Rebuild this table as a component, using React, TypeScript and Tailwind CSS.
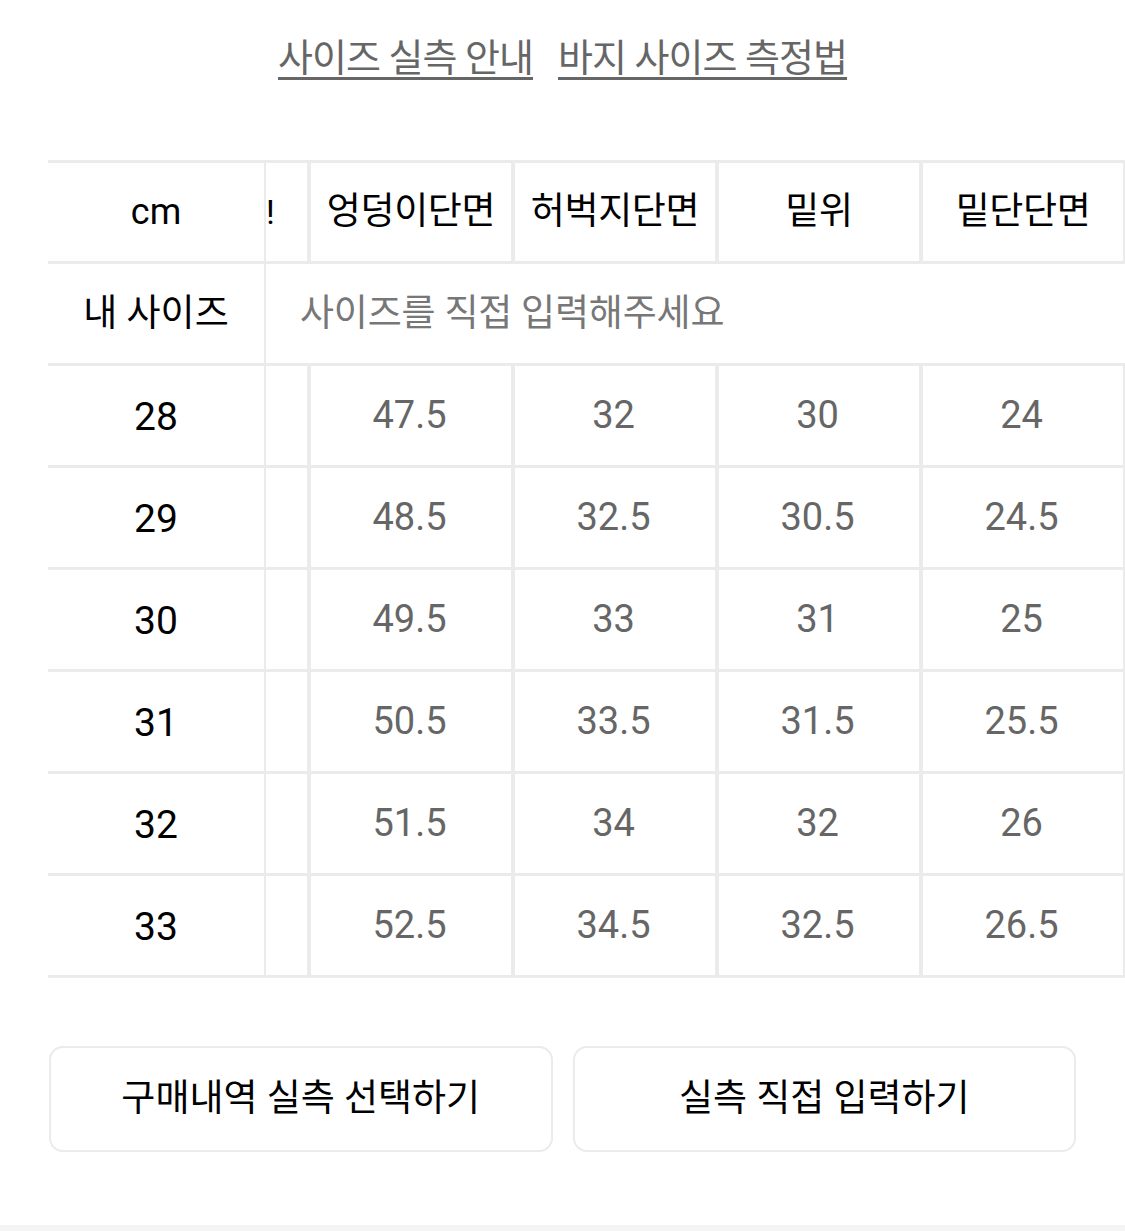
const font = "font-['Roboto','Noto_Sans_CJK_KR',sans-serif]"

const rows = [
  { size: '28', values: ['47.5', '32', '30', '24'] },
  { size: '29', values: ['48.5', '32.5', '30.5', '24.5'] },
  { size: '30', values: ['49.5', '33', '31', '25'] },
  { size: '31', values: ['50.5', '33.5', '31.5', '25.5'] },
  { size: '32', values: ['51.5', '34', '32', '26'] },
  { size: '33', values: ['52.5', '34.5', '32.5', '26.5'] },
]

const headers = ['엉덩이단면', '허벅지단면', '밑위', '밑단단면']

export default function App() {
  return (
    <div className={`${font} w-[1125px] h-[1231px] bg-white flex flex-col`}>
      {/* guide links */}
      <div className="flex justify-center gap-[25px] pt-[32px]">
        <a className="text-[38px] leading-[52px] text-[#666] underline decoration-[3px] underline-offset-[6px] tracking-[-0.025em]">
          사이즈 실측 안내
        </a>
        <a className="text-[38px] leading-[52px] text-[#666] underline decoration-[3px] underline-offset-[6px] tracking-[-0.025em]">
          바지 사이즈 측정법
        </a>
      </div>

      {/* size table */}
      <div className="ml-[48px] mt-[76px] overflow-hidden border-t-[3px] border-[#ebebeb]">
        <div className="flex h-[101px] border-b-[3px] border-[#ebebeb]">
          <div className="w-[218px] shrink-0 border-r-2 border-[#ebebeb] flex items-center justify-center text-[36px] text-black">
            cm
          </div>
          <div className="w-[45px] shrink-0 border-r-[4px] border-[#ebebeb] flex items-center pl-0 text-[34px] text-black">
            !
          </div>
          {headers.map((h) => (
            <div
              key={h}
              className="w-[204px] shrink-0 border-r-[4px] border-[#ebebeb] flex items-center justify-center text-[37px] text-black tracking-[-0.01em]"
            >
              {h}
            </div>
          ))}
        </div>

        <div className="flex h-[102px] border-b-[3px] border-[#ebebeb]">
          <div className="w-[218px] shrink-0 border-r-2 border-[#ebebeb] flex items-center justify-center text-[37px] text-black">
            내 사이즈
          </div>
          <div className="flex-1 flex items-center pl-[34px] text-[37px] text-[#777] tracking-[-0.005em]">
            사이즈를 직접 입력해주세요
          </div>
        </div>

        {rows.map((r) => (
          <div key={r.size} className="flex h-[102px] border-b-[3px] border-[#ebebeb]">
            <div className="w-[218px] shrink-0 border-r-2 border-[#ebebeb] flex items-center justify-center pt-[4px] text-[39px] text-black">
              {r.size}
            </div>
            <div className="w-[45px] shrink-0 border-r-[4px] border-[#ebebeb]" />
            {r.values.map((v, i) => (
              <div
                key={i}
                className="w-[204px] shrink-0 border-r-[4px] border-[#ebebeb] flex items-center justify-center pr-[3px] text-[38px] text-[#666]"
              >
                {v}
              </div>
            ))}
          </div>
        ))}
      </div>

      {/* actions */}
      <div className="flex gap-[20px] px-[49px] mt-[68px]">
        <button className="flex-1 h-[106px] rounded-[14px] border-2 border-[#ebebeb] bg-white text-[37px] text-black">
          구매내역 실측 선택하기
        </button>
        <button className="flex-1 h-[106px] rounded-[14px] border-2 border-[#ebebeb] bg-white text-[37px] text-black">
          실측 직접 입력하기
        </button>
      </div>

      <div className="mt-auto h-[6px] bg-[#f4f4f4]" />
    </div>
  )
}
